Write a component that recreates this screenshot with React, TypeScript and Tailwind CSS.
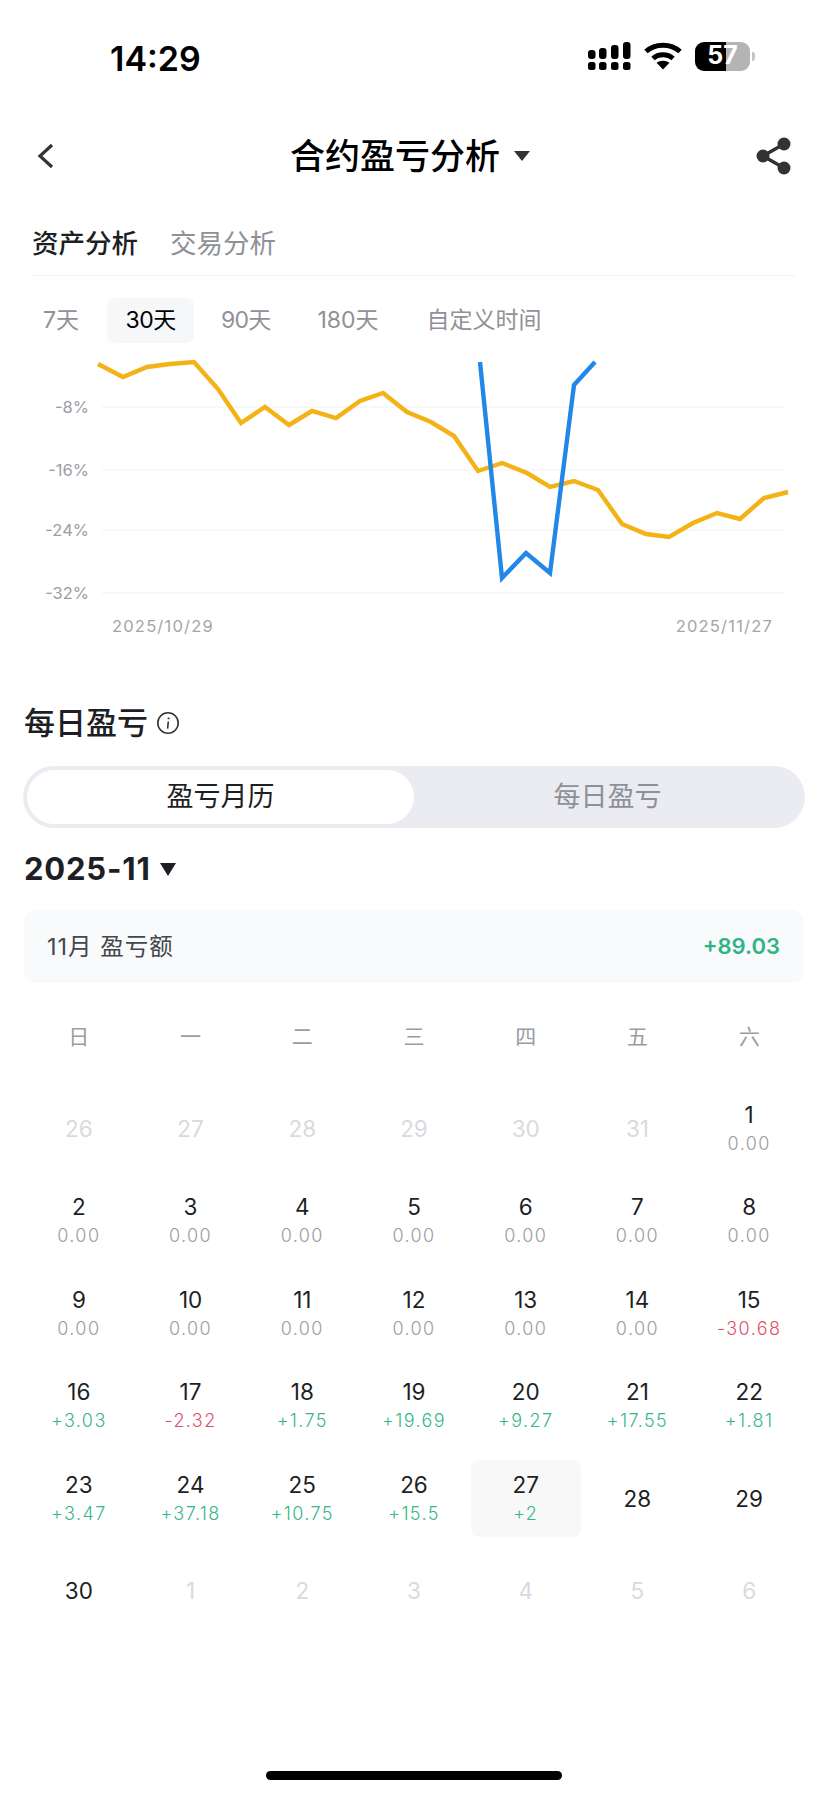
import React from "react";

const FONT = { fontFamily: "Inter, 'Noto Sans CJK SC', sans-serif" };

// chart points, in page pixels
const yellow = [
  [100, 364], [125, 377], [149, 367], [172, 364], [196, 362], [220, 389], [243, 423], [267, 407],
  [291, 425], [314, 411], [338, 418], [362, 401], [385, 393], [409, 412], [433, 422], [456, 436],
  [480, 471], [504, 463], [529, 473], [552, 487], [576, 481], [600, 490], [624, 524], [648, 534],
  [671, 537], [695, 523], [719, 513], [742, 519], [766, 498], [790, 492],
];
const blue = [[482, 362], [504, 578], [528, 553], [552, 573], [576, 385], [597, 362]];
const toPoints = (pts: number[][]) => pts.map((p) => p.join(",")).join(" ");

const gridLines = [
  { y: 407, label: "-8%" },
  { y: 470, label: "-16%" },
  { y: 530, label: "-24%" },
  { y: 593, label: "-32%" },
];

type Day = { d: number; v?: string; tone?: "gray" | "up" | "down"; faded?: boolean; today?: boolean };

const zero = (d: number): Day => ({ d, v: "0.00", tone: "gray" });
const up = (d: number, v: string): Day => ({ d, v, tone: "up" });
const down = (d: number, v: string): Day => ({ d, v, tone: "down" });
const faded = (d: number): Day => ({ d, faded: true });

const days: Day[] = [
  faded(26), faded(27), faded(28), faded(29), faded(30), faded(31), zero(1),
  zero(2), zero(3), zero(4), zero(5), zero(6), zero(7), zero(8),
  zero(9), zero(10), zero(11), zero(12), zero(13), zero(14), down(15, "-30.68"),
  up(16, "+3.03"), down(17, "-2.32"), up(18, "+1.75"), up(19, "+19.69"), up(20, "+9.27"), up(21, "+17.55"), up(22, "+1.81"),
  up(23, "+3.47"), up(24, "+37.18"), up(25, "+10.75"), up(26, "+15.5"), { ...up(27, "+2"), today: true }, { d: 28 }, { d: 29 },
  { d: 30 }, faded(1), faded(2), faded(3), faded(4), faded(5), faded(6),
];

function StatusIcons() {
  return (
    <div className="flex items-center">
      <svg width="44" height="30" viewBox="0 0 44 30" className="mr-[13px]" fill="#000">
        <rect x="1" y="9" width="7.5" height="9" rx="3" />
        <rect x="12" y="7" width="7.5" height="11" rx="3" />
        <rect x="24" y="4" width="7.5" height="14" rx="3" />
        <rect x="36" y="1" width="7.5" height="17" rx="3" />
        <rect x="1" y="21" width="7.5" height="8" rx="2.5" />
        <rect x="12" y="21" width="7.5" height="8" rx="2.5" />
        <rect x="24" y="21" width="7.5" height="8" rx="2.5" />
        <rect x="36" y="21" width="7.5" height="8" rx="2.5" />
      </svg>
      <svg width="38" height="28" viewBox="0 0 38 28" className="mr-[13px]" fill="none" stroke="#000" strokeWidth="5">
        <path d="M2 9.5 C11 1 27 1 36 9.5" />
        <path d="M9 16.5 C14.5 11.5 23.5 11.5 29 16.5" />
        <path d="M19 27.5 L12.5 20.8 C16 18 22 18 25.5 20.8 Z" fill="#000" stroke="none" />
      </svg>
      <div className="relative flex h-[29px] w-[55px] overflow-hidden rounded-[9px]">
        <div className="w-[31px] bg-black" />
        <div className="flex-1 bg-[#b4b4b4]" />
        <div className="absolute inset-0 flex items-center justify-center text-[25px] font-bold text-white">57</div>
      </div>
      <div className="ml-[2px] h-[9px] w-[3px] rounded-r-full bg-[#c4c4c4]" />
    </div>
  );
}

function Chart() {
  return (
    <svg width="828" height="300" viewBox="2 345 828 300" className="mt-[2px] block">
      {gridLines.map((g) => (
        <g key={g.y}>
          <line x1="104" x2="785" y1={g.y} y2={g.y} stroke="#f6f6f7" strokeWidth="1.5" />
          <text x="91" y={g.y + 6} textAnchor="end" fontSize="16.5" fill="#9b9da3" fontFamily="Inter, sans-serif">
            {g.label}
          </text>
        </g>
      ))}
      <polyline points={toPoints(yellow)} fill="none" stroke="#f3b215" strokeWidth="4.4" strokeLinejoin="miter" />
      <polyline points={toPoints(blue)} fill="none" stroke="#2188e8" strokeWidth="4.4" strokeLinejoin="miter" />
      <text x="114" y="632" fontSize="16.5" letterSpacing="1.2" fill="#a3a5aa" fontFamily="Inter, sans-serif">2025/10/29</text>
      <text x="775" y="632" textAnchor="end" fontSize="16.5" letterSpacing="1.2" fill="#a3a5aa" fontFamily="Inter, sans-serif">2025/11/27</text>
    </svg>
  );
}

function DayCell({ day }: { day: Day }) {
  const subColor =
    day.tone === "up" ? "text-[#37b689]" : day.tone === "down" ? "text-[#e04f6a]" : "text-[#9b9da3]";
  return (
    <div
      className={`flex h-[77px] flex-col items-center justify-center rounded-lg ${
        day.today ? "mx-[1px] bg-[#f8f8f9]" : ""
      }`}
    >
      <div className={`text-[22.5px] leading-[30px] ${day.faded ? "text-[#d9dadd]" : "text-[#1d1f24]"}`}>{day.d}</div>
      {day.v && <div className={`text-[18px] font-light leading-[28px] tracking-[1.4px] ${subColor}`}>{day.v}</div>}
    </div>
  );
}

export default function App() {
  return (
    <div className="flex h-[1795px] w-[828px] flex-col overflow-hidden bg-white" style={FONT}>
      {/* Status bar */}
      <div className="flex h-[112px] items-center justify-between pl-[110px] pr-[73px]">
        <div className="mt-[4px] text-[34px] font-semibold text-black">14:29</div>
        <StatusIcons />
      </div>

      {/* Nav */}
      <div className="flex h-[88px] items-center justify-between pl-[36px] pr-[36px]">
        <svg width="18" height="26" viewBox="0 0 18 26" fill="none" stroke="#333" strokeWidth="3.2">
          <path d="M16 2 L4 13 L16 24" />
        </svg>
        <div className="ml-[10px] flex items-center">
          <span className="text-[35px] font-medium leading-none text-black">合约盈亏分析</span>
          <svg width="16" height="10" viewBox="0 0 16 10" className="ml-[14px]" fill="#333">
            <path d="M0 0 H16 L8 10 Z" />
          </svg>
        </div>
        <svg width="36" height="38" viewBox="0 0 36 38" fill="#333">
          <circle cx="28" cy="7" r="6.5" />
          <circle cx="7" cy="19" r="6.5" />
          <circle cx="28" cy="31" r="6.5" />
          <path d="M7 19 L28 7 M7 19 L28 31" stroke="#333" strokeWidth="3.5" />
        </svg>
      </div>

      {/* Tabs */}
      <div className="ml-[32px] mr-[32px] flex h-[76px] items-center gap-[32px] border-b border-[#f3f3f4] pt-[12px] text-[26.5px]">
        <span className="font-medium text-[#1d1f24]">资产分析</span>
        <span className="text-[#8f9197]">交易分析</span>
      </div>

      {/* Range */}
      <div className="mt-[22px] flex h-[45px] items-center pl-[43px] text-[23px] text-[#8f9197]">
        <span>7天</span>
        <span className="ml-[28px] flex h-[45px] w-[87px] items-center justify-center rounded-lg bg-[#f5f7f9] tracking-[-0.5px] text-black">
          30天
        </span>
        <span className="ml-[27px] tracking-[-0.8px]">90天</span>
        <span className="ml-[47px]">180天</span>
        <span className="ml-[48px]">自定义时间</span>
      </div>

      <Chart />

      {/* Daily PnL */}
      <div className="mt-[56px] flex h-[44px] items-center px-[24px]">
        <span className="text-[31px] font-medium text-[#1d1f24]">每日盈亏</span>
        <svg width="24" height="24" viewBox="0 0 24 24" className="ml-[8px]" fill="none" stroke="#333" strokeWidth="1.6">
          <circle cx="12" cy="12" r="10.2" />
          <path d="M12.6 6.6 v1.6" strokeWidth="2" />
          <path d="M12.3 10.5 L11.6 17.6" />
        </svg>
      </div>

      <div className="mx-[23px] mt-[21px] flex h-[62px] rounded-full bg-[#ebecf2] p-[4px] text-[27px]">
        <div className="flex w-[387px] items-center justify-center rounded-full bg-white text-[#1d1f24]">盈亏月历</div>
        <div className="flex flex-1 items-center justify-center text-[#8d9097]">每日盈亏</div>
      </div>

      <div className="mt-[21px] flex h-[40px] items-center px-[24px]">
        <span className="text-[31px] font-bold tracking-[0.8px] text-[#1d1f24]">2025-11</span>
        <svg width="16" height="13" viewBox="0 0 16 13" className="ml-[9px]" fill="#1d1f24">
          <path d="M0 0 H16 L8 13 Z" />
        </svg>
      </div>

      <div className="mx-[24px] mt-[21px] flex h-[73px] items-center justify-between rounded-xl bg-[#f8fafb] pl-[23px] pr-[24px]">
        <span className="text-[23.5px] tracking-[1px] text-[#44464c]">11月 盈亏额</span>
        <span className="text-[22px] font-semibold text-[#2fb585]">+89.03</span>
      </div>

      {/* Calendar */}
      <div className="mx-[23px] mt-[38px] grid h-[30px] grid-cols-7 items-center text-center text-[21px] text-[#9a9ca2]">
        {["日", "一", "二", "三", "四", "五", "六"].map((w) => (
          <span key={w}>{w}</span>
        ))}
      </div>
      <div className="mx-[23px] mt-[39px] grid grid-cols-7 gap-y-[15.6px] text-center">
        {days.map((day, i) => (
          <DayCell key={i} day={day} />
        ))}
      </div>

      <div className="mx-auto mb-[15px] mt-auto h-[9px] w-[296px] rounded-full bg-black" />
    </div>
  );
}
